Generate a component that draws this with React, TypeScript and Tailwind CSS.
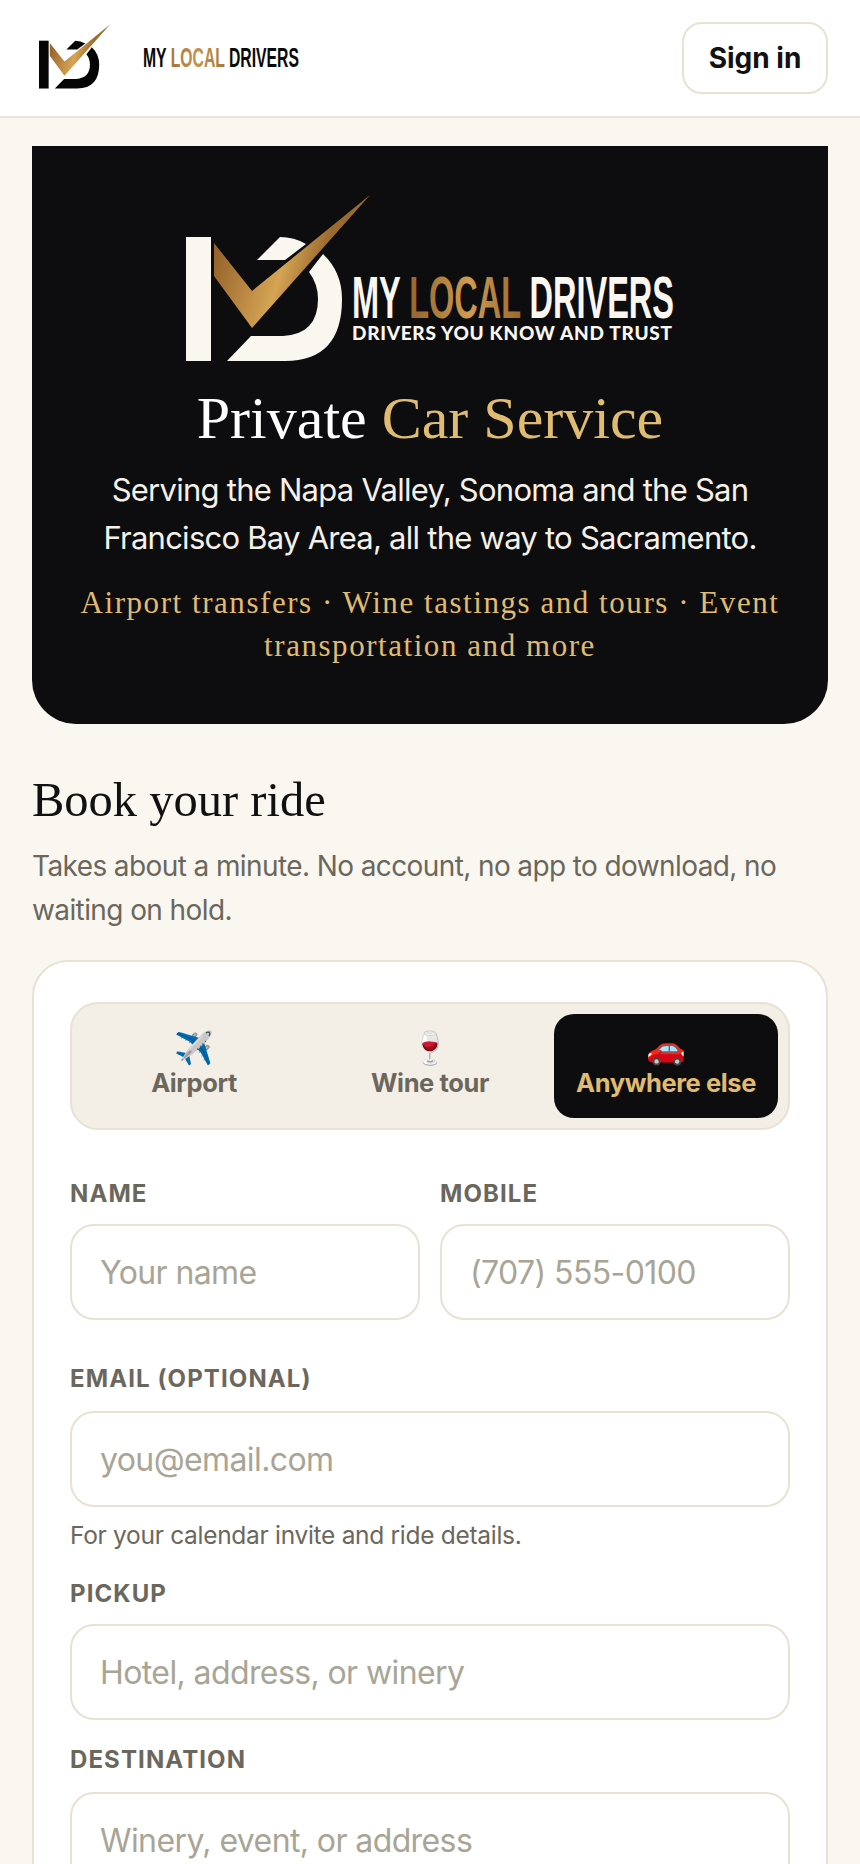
import React from 'react';

const body = { fontFamily: 'Inter, "Noto Sans", sans-serif' };
const serif = { fontFamily: '"Liberation Serif", serif' };
const narrow = '"Liberation Sans Narrow", "Liberation Sans", sans-serif';

// The MD monogram with the gold check through it
function Mark({ color, gradId }: { color: string; gradId: string }) {
  return (
    <>
      <defs>
        <linearGradient id={gradId} gradientUnits="userSpaceOnUse" x1="28" y1="60" x2="130" y2="90">
          <stop offset="0" stopColor="#94622b" />
          <stop offset="0.65" stopColor="#d6a454" />
          <stop offset="1" stopColor="#9a6a2f" />
        </linearGradient>
      </defs>
      <rect x="0" y="43" width="25" height="124" fill={color} />
      <path d="M94 43 Q108 43 120 50 L99 66 L71 66 Z" fill={color} />
      <path d="M137 60 Q156 78 156 105 Q156 167 99 167 L41 167 L65 142 L97 142 Q132 140 132 105 Q132 90 123 78 Z" fill={color} />
      <polygon points="28,49 66,97 184,1 66,134 28,82" fill={`url(#${gradId})`} />
    </>
  );
}

function Field({ label, placeholder, className = '', inputGap = 'mt-[14px]' }: { label: string; placeholder: string; className?: string; inputGap?: string }) {
  return (
    <label className={`block ${className}`}>
      <span className="block text-[24px] leading-[32px] font-bold tracking-[1.1px] text-[#6b675c]">{label}</span>
      <input
        placeholder={placeholder}
        className={`${inputGap} block w-full h-[96px] px-[28px] rounded-[24px] bg-white border-2 border-[#e7e2d3] text-[32px] tracking-[-0.6px] text-[#1a1a1a] placeholder:text-[#a8a596] outline-none`}
      />
    </label>
  );
}

const tabs = [
  { icon: '✈️', label: 'Airport' },
  { icon: '🍷', label: 'Wine tour' },
  { icon: '🚗', label: 'Anywhere else', active: true },
];

export default function App() {
  return (
    <div className="h-[1864px] overflow-hidden bg-[#faf7f1]" style={body}>
      <header className="h-[118px] bg-white border-b-2 border-[#ebe5d9] flex items-center justify-between pl-[39px] pr-[32px]">
        <div className="flex items-center">
          <svg width="71" height="65" viewBox="0 0 184 168" className="mt-[-3px]">
            <Mark color="#050505" gradId="mark-small" />
          </svg>
          <svg width="160" height="28" viewBox="0 0 160 28" className="ml-[33px] overflow-visible">
            <defs>
              <linearGradient id="local-small" gradientUnits="userSpaceOnUse" x1="30" y1="0" x2="81" y2="0">
                <stop offset="0" stopColor="#a9773a" />
                <stop offset="0.5" stopColor="#c4934c" />
                <stop offset="1" stopColor="#a9773a" />
              </linearGradient>
            </defs>
            <text x="0" y="23" fontSize="27" fontWeight="700" textLength="156" lengthAdjust="spacingAndGlyphs" fontFamily={narrow} fill="#0a0a0a">
              MY <tspan fill="url(#local-small)">LOCAL</tspan> DRIVERS
            </text>
          </svg>
        </div>
        <button className="w-[146px] h-[72px] rounded-[20px] bg-white border-2 border-[#e7e2d3] text-[28px] font-bold text-[#111111]">Sign in</button>
      </header>

      <main className="px-[32px]">
        <section className="mt-[28px] h-[578px] bg-[#0d0d0f] rounded-b-[44px] flex flex-col items-center pt-[48px]">
          <svg width="490" height="170" viewBox="0 0 490 170" className="ml-[2px]">
            <defs>
              <linearGradient id="local-large" gradientUnits="userSpaceOnUse" x1="232" y1="0" x2="335" y2="0">
                <stop offset="0" stopColor="#9a6a2f" />
                <stop offset="0.5" stopColor="#cf9c50" />
                <stop offset="1" stopColor="#9a6a2f" />
              </linearGradient>
            </defs>
            <Mark color="#faf7f1" gradId="mark-large" />
            <text x="166" y="124" fontSize="60" fontWeight="700" textLength="322" lengthAdjust="spacingAndGlyphs" fontFamily={narrow} fill="#faf7f1">
              MY <tspan fill="url(#local-large)">LOCAL</tspan> DRIVERS
            </text>
            <text x="166" y="146" fontSize="19" fontWeight="900" textLength="320" lengthAdjust="spacing" fontFamily="Lato, sans-serif" fill="#faf7f1">
              DRIVERS YOU KNOW AND TRUST
            </text>
          </svg>
          <h1 className="mt-[20px] text-[60px] leading-[68px] font-normal text-white" style={serif}>
            Private <span className="text-[#e0bb72]">Car Service</span>
          </h1>
          <p className="mt-[14px] w-[690px] text-center text-[31px] leading-[48px] tracking-[-0.75px] text-[#f5f1e8]">
            Serving the Napa Valley, Sonoma and the San Francisco Bay Area, all the way to Sacramento.
          </p>
          <p className="mt-[19px] w-[720px] text-center text-[31px] leading-[43px] tracking-[1.55px] text-[#e0bb72]" style={serif}>
            Airport transfers · Wine tastings and tours · Event transportation and more
          </p>
        </section>

        <h2 className="mt-[48px] text-[48.5px] leading-[56px] font-normal text-[#111111]" style={serif}>Book your ride</h2>
        <p className="mt-[16px] text-[28px] leading-[44px] tracking-[-0.6px] text-[#6b675c]">
          Takes about a minute. No account, no app to download, no waiting on hold.
        </p>

        <section className="mt-[28px] bg-white border-2 border-[#e7e2d3] rounded-[36px] pt-[40px] px-[36px] pb-[40px]">
          <div className="h-[128px] rounded-[28px] bg-[#f3efe7] border-2 border-[#e7e2d3] p-[10px] grid grid-cols-3 gap-[12px]">
            {tabs.map((t) => (
              <div
                key={t.label}
                className={`rounded-[20px] flex flex-col items-center justify-center ${t.active ? 'bg-[#0d0d0f] text-[#e0bb72]' : 'text-[#6b675c]'}`}
              >
                <span className="mt-[-2px] mb-[2px] text-[32px] leading-[34px]">{t.icon}</span>
                <span className="text-[25.5px] leading-[32px] font-bold tracking-[-0.4px] whitespace-nowrap">{t.label}</span>
              </div>
            ))}
          </div>

          <div className="mt-[48px] grid grid-cols-2 gap-x-[20px]">
            <Field label="NAME" placeholder="Your name" />
            <Field label="MOBILE" placeholder="(707) 555-0100" />
          </div>
          <Field className="mt-[43px]" inputGap="mt-[16px]" label="EMAIL (OPTIONAL)" placeholder="you@email.com" />
          <p className="mt-[10px] text-[24.5px] leading-[36px] tracking-[-0.3px] text-[#6b675c]">For your calendar invite and ride details.</p>
          <Field className="mt-[25px]" label="PICKUP" placeholder="Hotel, address, or winery" />
          <Field className="mt-[24px]" inputGap="mt-[16px]" label="DESTINATION" placeholder="Winery, event, or address" />
        </section>
      </main>
    </div>
  );
}
